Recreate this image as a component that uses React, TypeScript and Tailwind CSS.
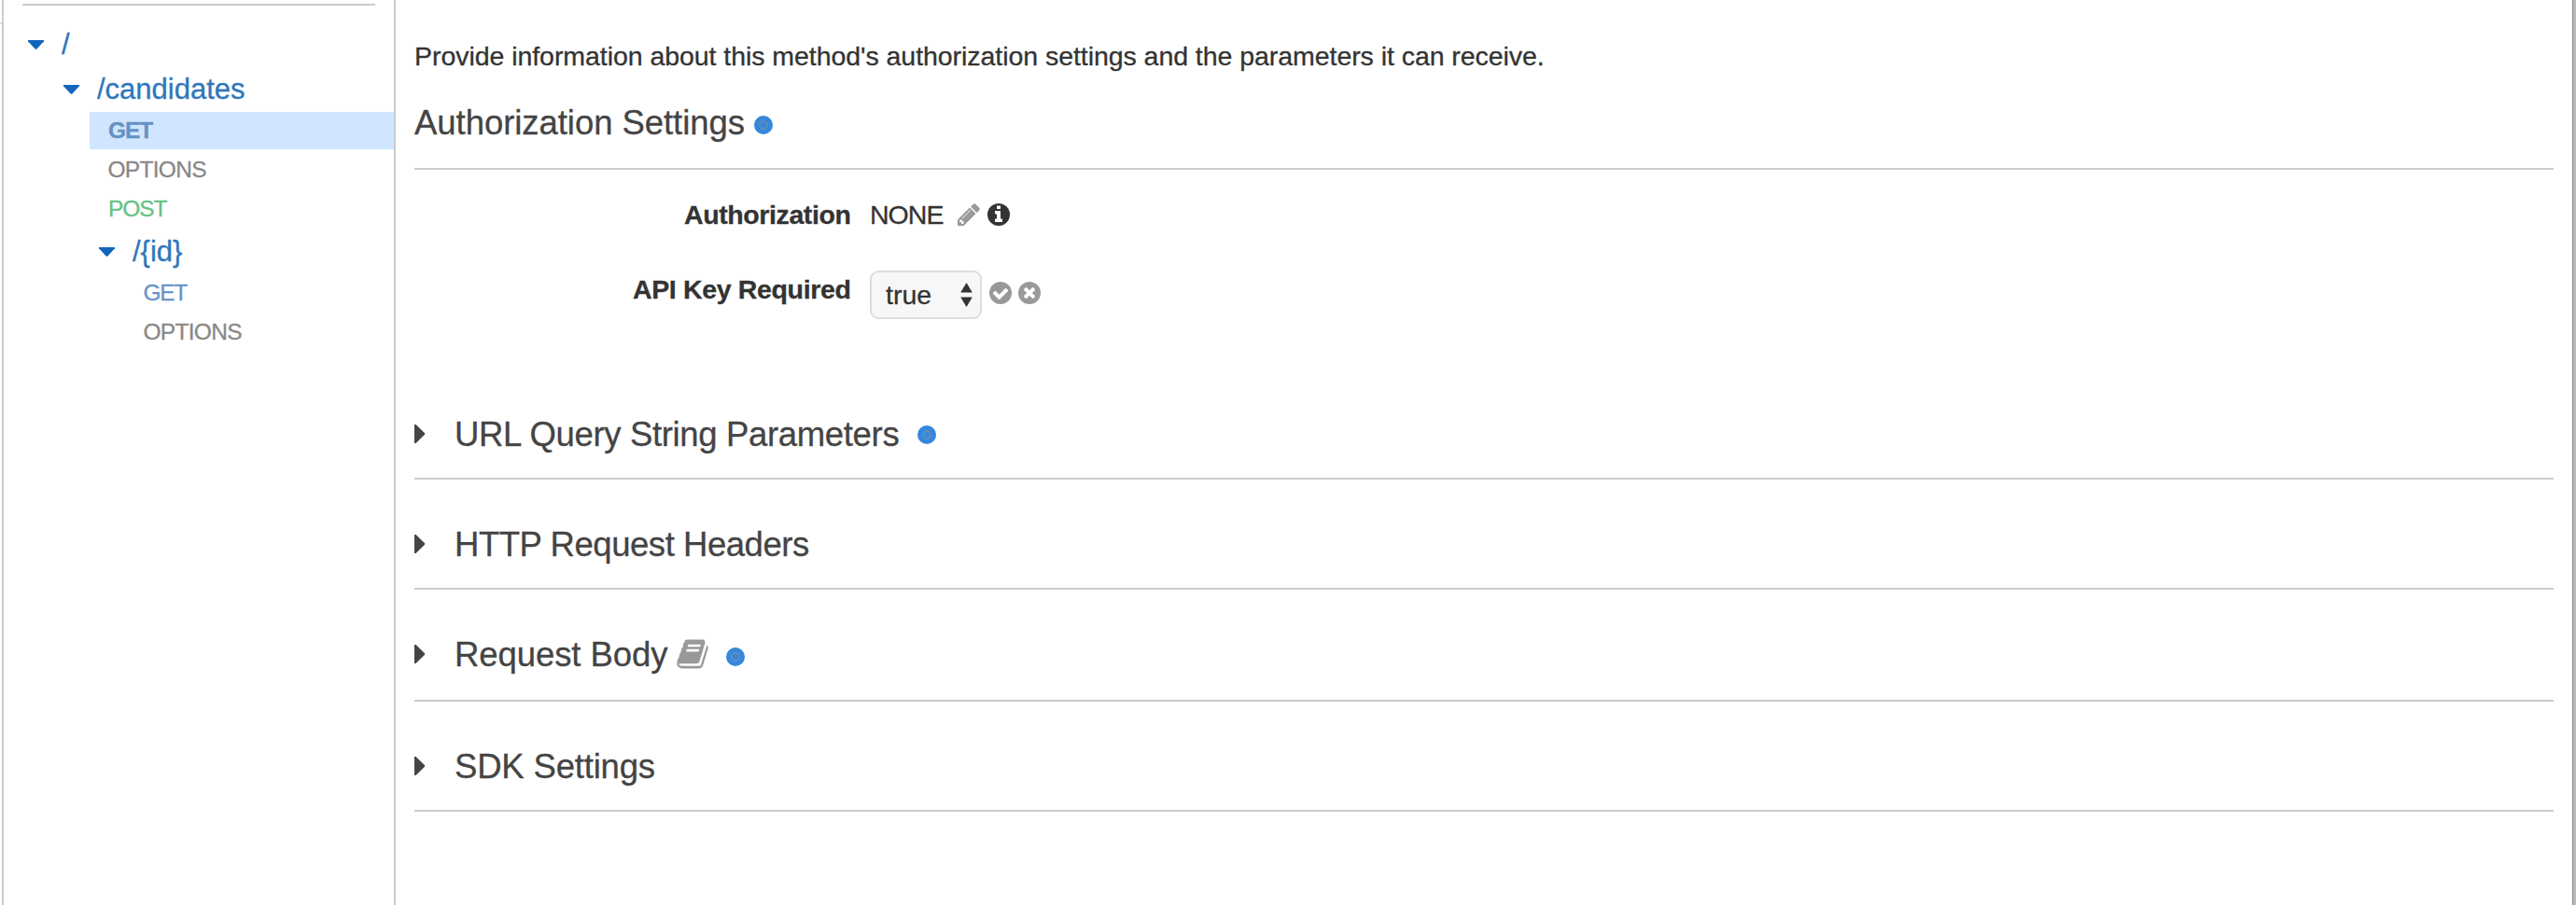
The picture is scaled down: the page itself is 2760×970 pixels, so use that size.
import type { ReactNode } from "react";

const INFO = "M1152 1376v-160q0-14-9-23t-23-9h-96v-512q0-14-9-23t-23-9h-320q-14 0-23 9t-9 23v160q0 14 9 23t23 9h96v320h-96q-14 0-23 9t-9 23v160q0 14 9 23t23 9h448q14 0 23-9t9-23zM1024 480v-160q0-14-9-23t-23-9h-192q-14 0-23 9t-9 23v160q0 14 9 23t23 9h192q14 0 23-9t9-23z";
const CHECK = "M1412 734q0-28-18-46l-91-90q-19-19-45-19t-45 19l-408 407-226-226q-19-19-45-19t-45 19l-91 90q-18 18-18 46 0 27 18 45l362 362q19 19 45 19 27 0 46-19l543-543q18-18 18-45z";
const TIMES = "M1277 1122q0-26-19-45l-181-181 181-181q19-19 19-45 0-27-19-46l-90-90q-19-19-46-19-26 0-45 19l-181 181-181-181q-19-19-45-19-27 0-46 19l-90 90q-19 19-19 46 0 26 19 45l181 181-181 181q-19 19-19 45 0 27 19 46l90 90q19 19 46 19 26 0 45-19l181-181 181 181q19 19 45 19 27 0 46-19l90-90q19-19 19-46z";
const PENCIL = "M491 1536l91-91-235-235-91 91v107h128v128h107zm523-928q0-22-22-22-10 0-17 7l-542 542q-7 7-7 17 0 22 22 22 10 0 17-7l542-542q7-7 7-17zm-54-192l416 416-832 832h-416v-416zm683 96q0 53-37 90l-166 166-416-416 166-165q36-38 90-38 53 0 91 38l235 234q37 39 37 91z";
const BOOK = "M1703 478q40 57 18 129l-275 906q-19 64-76.5 107.5t-122.5 43.5h-923q-77 0-148.5-53.5t-99.5-131.5q-24-67-2-127 0-4 3-27t4-37q1-8-3-21.5t-3-19.5q2-11 8-21t16.5-23.5 16.5-23.5q23-38 45-91.5t30-91.5q3-10 .5-30t-.5-28q3-11 17-28t17-23q21-36 42-92t25-90q1-9-2.5-32t.5-28q4-13 22-30.5t22-22.5q19-26 42.5-84.5t27.5-96.5q1-8-3-25.5t-2-26.5q2-8 9-18t18-23 17-21q8-12 16.5-30.5t15-35 16-36 19.5-32 26.5-23.5 36-11.5 47.5 5.5l-1 3q38-9 51-9h761q74 0 114 56t18 130l-274 906q-36 119-71.5 153.5t-128.5 34.5h-869q-27 0-38 15-11 16-1 43 24 70 144 70h923q29 0 56-15.5t35-41.5l300-987q7-22 5-57 38 15 59 43zm-1064 2q-4 13 2 22.5t20 9.5h608q13 0 25.5-9.5t16.5-22.5l21-64q4-13-2-22.5t-20-9.5h-608q-13 0-25.5 9.5t-16.5 22.5zm-83 256q-4 13 2 22.5t20 9.5h608q13 0 25.5-9.5t16.5-22.5l21-64q4-13-2-22.5t-20-9.5h-608q-13 0-25.5 9.5t-16.5 22.5z";

function Glyph({ d, className }: { d: string; className: string }) {
  return (
    <svg viewBox="0 0 1792 1792" className={`shrink-0 fill-current ${className}`}>
      <path d={d} />
    </svg>
  );
}

/* Filled disc with a white symbol on it */
function Disc({ d, className }: { d: string; className: string }) {
  return (
    <svg viewBox="0 0 1792 1792" className={`size-7 shrink-0 ${className}`}>
      <circle cx="896" cy="896" r="768" fill="currentColor" />
      <path d={d} fill="#fff" />
    </svg>
  );
}

function Dot({ className }: { className: string }) {
  return (
    <svg viewBox="0 0 20 20" className={`size-5 shrink-0 ${className}`}>
      <circle cx="10" cy="10" r="10" fill="#3487dd" />
      <circle cx="10" cy="10" r="4" fill="none" stroke="#6f90a8" strokeWidth="1.4" />
    </svg>
  );
}

function Resource({ label, className }: { label: string; className: string }) {
  return (
    <div className={`flex h-10 items-start text-[31px] leading-10 text-[#2d77bb] ${className}`}>
      <svg viewBox="0 0 17 10" className="mt-4 h-[10px] w-[17px] shrink-0">
        <path d="M0 0H17V1.2L9.6 9.2Q8.5 10.2 7.4 9.2L0 1.2Z" fill="#1166bb" />
      </svg>
      <span className="ml-[19px] pt-px">{label}</span>
    </div>
  );
}

function Method({ label, className }: { label: string; className: string }) {
  return <div className={`h-10 text-[24.5px] leading-10 ${className}`}>{label}</div>;
}

function Section({ title, className, children }: { title: string; className: string; children?: ReactNode }) {
  return (
    <section className={`flex items-start border-b-2 border-[#ccc] text-[36.5px] leading-10 text-[#444] ${className}`}>
      <svg viewBox="0 0 12 20" className="mt-[10px] h-5 w-3 shrink-0">
        <path d="M0 0H1.6L10.8 9Q11.8 10 10.8 11L1.6 20H0Z" fill="#444" />
      </svg>
      <h2 className="ml-[31px] pt-px">{title}</h2>
      {children}
    </section>
  );
}

export default function App() {
  return (
    <div className="relative flex h-[970px] w-[2760px] overflow-hidden whitespace-nowrap bg-white pl-[2px] font-['Liberation_Sans',Arial,sans-serif] [-webkit-text-stroke:0.3px]">
      <div className="absolute left-0 top-[24px] h-[2px] w-[2px] bg-[#ddd]" />

      <nav className="flex w-[422px] shrink-0 flex-col border-x-2 border-[#ccc]">
        <div className="ml-5 mt-1 h-[2px] w-[378px] shrink-0 bg-[#ccc]" />
        <Resource label="/" className="ml-[26px] mt-[21px]" />
        <Resource label="/candidates" className="ml-16 mt-2" />
        <Method label="GET" className="ml-[92px] mt-[5px] bg-[#d0e6fe] pl-5 font-bold tracking-[-1.1px] text-[#6592c4]" />
        <Method label="OPTIONS" className="ml-[111.5px] mt-[2px] tracking-[-0.7px] text-[#888]" />
        <Method label="POST" className="ml-[112px] mt-[2px] tracking-[-1.1px] text-[#66c183]" />
        <Resource label="/{id}" className="ml-[102px] mt-[5px]" />
        <Method label="GET" className="ml-[149.5px] mt-[5px] tracking-[-1.3px] text-[#6592c4]" />
        <Method label="OPTIONS" className="ml-[149.5px] mt-[2px] tracking-[-0.7px] text-[#888]" />
      </nav>

      <main className="flex grow flex-col pl-5 pr-5 pt-10 text-[28.5px] leading-10 text-[#333]">
        <p className="tracking-[-0.052px]">
          Provide information about this method's authorization settings and the parameters it can receive.
        </p>

        <div className="mt-[31px] flex h-[71px] items-start border-b-2 border-[#ccc] text-[36.5px] leading-10 text-[#444]">
          <h2 className="w-[364px] pt-px tracking-[-0.05px]">Authorization Settings</h2>
          <Dot className="mt-[13px]" />
        </div>

        <div className="mt-7 flex h-10 items-start">
          <div className="w-[467.5px] text-right font-bold tracking-[-0.4px]">Authorization</div>
          <div className="ml-[20.5px] w-[92px] tracking-[-0.97px]">NONE</div>
          <Glyph d={PENCIL} className="mt-[6px] size-7 text-[#999]" />
          <Disc d={INFO} className="ml-1 mt-[6px] text-[#333]" />
        </div>

        <div className="mt-10 flex h-[52px] items-start">
          <div className="w-[467.5px] text-right font-bold tracking-[-0.35px]">API Key Required</div>
          <div className="ml-[20.5px] flex h-[52px] w-[120px] items-center justify-between rounded-[9px] border-2 border-[#ddd] bg-[#f7f7f7] pl-[15px] pr-2">
            <span>true</span>
            <svg viewBox="0 0 13 26" className="h-[26px] w-[13px]">
              <path d="M6.5 0L12.8 10.4H.2ZM6.5 26L12.8 15.6H.2Z" fill="#333" />
            </svg>
          </div>
          <Disc d={CHECK} className="ml-[5.5px] mt-[10px] text-[#999]" />
          <Disc d={TIMES} className="ml-[3.5px] mt-[10px] text-[#999]" />
        </div>

        <Section title="URL Query String Parameters" className="mt-[103px] h-[69px] tracking-[-0.34px]">
          <Dot className="ml-[20px] mt-[11px]" />
        </Section>
        <Section title="HTTP Request Headers" className="mt-[49px] h-[69px] tracking-[-0.45px]" />
        <Section title="Request Body" className="mt-[49px] h-[71px] tracking-[-0.08px]">
          <Glyph d={BOOK} className="ml-[9px] mt-[2px] size-9 text-[#999]" />
          <Dot className="ml-[18px] mt-[13px]" />
        </Section>
        <Section title="SDK Settings" className="mt-[49px] h-[69px] tracking-[-0.18px]" />
      </main>

      <div className="w-1 shrink-0 border-l border-[#888] bg-[#bbb]" />
    </div>
  );
}
